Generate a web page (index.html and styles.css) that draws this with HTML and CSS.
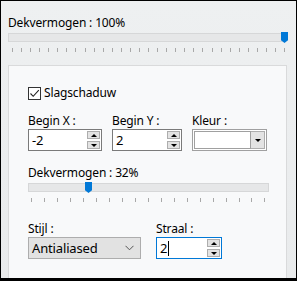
FILE: index.html
```html
<!DOCTYPE html>
<html>
<head>
<meta charset="utf-8">
<link rel="stylesheet" href="styles.css">
</head>
<body>
<div class="frame">
  <div class="top">
    <div class="lbl">Dekvermogen : 100%</div>
    <div class="slider wide">
      <div class="track"></div>
      <div class="thumb" style="left:273px"></div>
    </div>
    <div class="ticks wide-ticks"></div>
  </div>
  <div class="panel">
    <label class="check">
      <span class="box"><svg width="11" height="11" viewBox="0 0 11 11"><path d="M1.5 5.5 L4.2 8.3 L9.8 2.2" fill="none" stroke="#222" stroke-width="1.1"/></svg></span>
      <span>Slagschaduw</span>
    </label>
    <div class="grid3">
      <div class="field">
        <div class="lbl">Begin X :</div>
        <div class="spin w74">
          <span class="val">-2</span>
          <span class="btns"><span class="sb"><i class="up"></i></span><span class="sb"><i class="dn"></i></span></span>
        </div>
      </div>
      <div class="field">
        <div class="lbl">Begin Y :</div>
        <div class="spin w70">
          <span class="val">2</span>
          <span class="btns"><span class="sb"><i class="up"></i></span><span class="sb"><i class="dn"></i></span></span>
        </div>
      </div>
      <div class="field">
        <div class="lbl">Kleur :</div>
        <div class="color">
          <span class="swatch"></span>
          <span class="drop"><i class="dn"></i></span>
        </div>
      </div>
    </div>
    <div class="lbl op">Dekvermogen : 32%</div>
    <div class="slider small">
      <div class="track"></div>
      <div class="thumb" style="left:57px"></div>
    </div>
    <div class="ticks small-ticks"></div>
    <div class="row2">
      <div class="field">
        <div class="lbl">Stijl :</div>
        <div class="select"><span>Antialiased</span>
          <svg width="9" height="6" viewBox="0 0 9 6"><path d="M0.5 0.8 L4.5 4.8 L8.5 0.8" fill="none" stroke="#555" stroke-width="1"/></svg>
        </div>
      </div>
      <div class="field">
        <div class="lbl">Straal :</div>
        <div class="spin w66 focus">
          <span class="val">2<span class="caret"></span></span>
          <span class="btns"><span class="sb"><i class="up"></i></span><span class="sb"><i class="dn"></i></span></span>
        </div>
      </div>
    </div>
  </div>
</div>
</body>
</html>
```
FILE: styles.css
```css
* { box-sizing: border-box; }
html, body { margin: 0; padding: 0; }
body {
  width: 297px; height: 281px; overflow: hidden;
  font-family: "Noto Sans", "Open Sans", sans-serif;
  font-size: 12px; line-height: 16px; color: #000;
  letter-spacing: -0.15px;
}
.frame {
  width: 297px; height: 281px;
  border: 1px solid #000; border-bottom-width: 3px;
  background: linear-gradient(#eef0f1, #e9ebec);
  display: flex; flex-direction: column;
  padding: 14px 9px 0 7px;
}
.top { display: flex; flex-direction: column; }
.lbl { height: 16px; white-space: nowrap; }
.slider { position: relative; margin-top: 2px; height: 9px; }
.slider.wide { width: 278px; }
.slider.small { width: 241px; }
.track {
  height: 9px; background: #e6e7e8; border: 1px solid #d6d7d8;
}
.thumb {
  position: absolute; top: -1px; width: 7px; height: 11px;
  background: #0078d7;
  clip-path: polygon(0 0, 100% 0, 100% 75%, 50% 100%, 0 75%);
}
.ticks { height: 4px; margin-top: 6px; }
.wide-ticks {
  width: 278px;
  background: repeating-linear-gradient(90deg, transparent 0 4px, #a8a8a8 4px 5px, transparent 5px 9.07px);
}
.small-ticks {
  width: 241px;
  background: repeating-linear-gradient(90deg, transparent 0 3px, #a8a8a8 3px 4px, transparent 4px 12.97px);
}
.panel {
  margin-top: 13px; flex: 1;
  width: 279px;
  background: #f8f9fa; border: 1px solid #d9dadb; border-bottom: none;
  padding: 19px 0 0 19px;
  display: flex; flex-direction: column;
}
.check { display: flex; align-items: center; height: 16px; margin-top: 0; }
.box {
  width: 13px; height: 13px; border: 1px solid #333; background: #fff;
  display: flex; align-items: center; justify-content: center; margin-right: 3px;
}
.grid3 {
  margin-top: 12px;
  display: grid; grid-template-columns: 74px 70px 75px; column-gap: 10px;
}
.field { display: flex; flex-direction: column; }
.spin {
  height: 22px; border: 1px solid #7a7a7a; background: #fff;
  display: flex; align-items: center; justify-content: space-between;
  padding: 0 1px 0 3px;
}
.spin.focus { border-color: #0078d7; }
.w74 { width: 74px; } .w70 { width: 70px; } .w66 { width: 66px; }
.val { position: relative; display: flex; align-items: center; font-size: 13px; }
.caret { display: inline-block; width: 1px; height: 15px; background: #000; margin-left: 1px; }
.btns { display: flex; flex-direction: column; gap: 2px; }
.sb {
  width: 13px; height: 8px; background: #e3e3e3; border: 1px solid #adadad;
  display: flex; align-items: center; justify-content: center;
}
i.up, i.dn { display: block; width: 0; height: 0; border-left: 3px solid transparent; border-right: 3px solid transparent; }
i.up { border-bottom: 3px solid #000; }
i.dn { border-top: 3px solid #000; }
.color {
  width: 75px; height: 22px; border: 1px solid #a0a0a0; background: #fff;
  padding: 1px; display: flex;
}
.swatch { flex: 1; border: 1px solid #a0a0a0; background: #fff; }
.drop {
  width: 14px; background: #e3e3e3; border: 1px solid #adadad; border-left: none;
  display: flex; align-items: center; justify-content: center;
}
.op { margin-top: 14px; }
.row2 { margin-top: 19px; display: flex; gap: 15px; }
.select {
  width: 113px; height: 22px; background: #e2e2e2; border: 1px solid #adadad;
  display: flex; align-items: center; justify-content: space-between;
  padding: 0 6px 0 3px;
  font-size: 13px;
}
```
